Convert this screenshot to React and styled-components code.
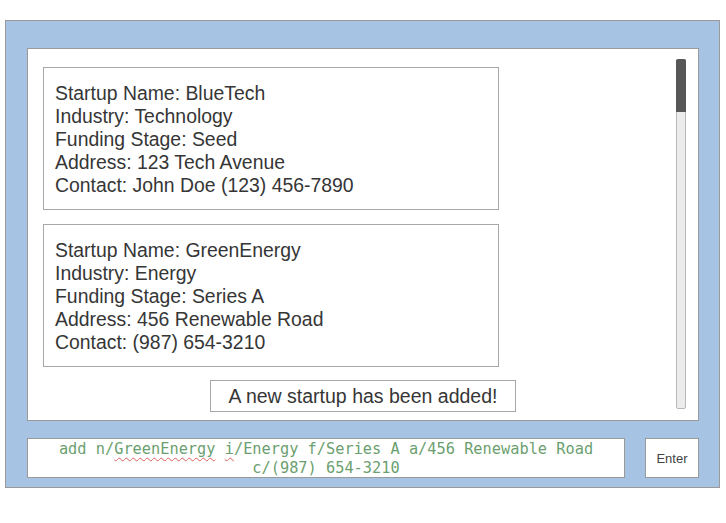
import React from "react";
import styled, { createGlobalStyle } from "styled-components";

const GlobalStyle = createGlobalStyle`
    body {
        margin: 0;
        background: #ffffff;
        font-family: "Liberation Sans", Arial, sans-serif;
    }
`;

const startups = [
    {
        name: "BlueTech",
        industry: "Technology",
        stage: "Seed",
        address: "123 Tech Avenue",
        contact: "John Doe (123) 456-7890",
    },
    {
        name: "GreenEnergy",
        industry: "Energy",
        stage: "Series A",
        address: "456 Renewable Road",
        contact: "(987) 654-3210",
    },
];

const Page = styled.div`
    padding: 20px 6px 0 5px;
    width: 726px;
    box-sizing: border-box;
`;

const Frame = styled.div`
    background: #a6c3e4;
    border: 1px solid #9a9a9a;
    height: 468px;
    box-sizing: border-box;
    padding: 27px 20px 9px 21px;
    display: flex;
    flex-direction: column;
    gap: 17px;
`;

const Panel = styled.div`
    position: relative;
    background: #ffffff;
    border: 1px solid #9a9a9a;
    height: 373px;
    box-sizing: border-box;
    padding: 18px 15px 8px 15px;
    display: flex;
    flex-direction: column;
    gap: 14px;
`;

const Card = styled.div`
    width: 456px;
    height: 143px;
    box-sizing: border-box;
    border: 1.5px solid #a8a8a8;
    padding: 14px 11px 12px;
    color: #363636;
    font-size: 19.4px;
    line-height: 23px;
`;

const Notice = styled.div`
    align-self: center;
    width: 306px;
    height: 32px;
    box-sizing: border-box;
    margin-top: -1px;
    border: 1.5px solid #a8a8a8;
    color: #363636;
    font-size: 19.5px;
    display: flex;
    align-items: center;
    justify-content: center;
`;

const ScrollTrack = styled.div`
    position: absolute;
    top: 10px;
    right: 12px;
    bottom: 11px;
    width: 10px;
    box-sizing: border-box;
    background: #ececec;
    border: 1px solid #b8b8b8;
    border-radius: 2px;
`;

const ScrollThumb = styled.div`
    height: 53px;
    margin: -1px;
    background: #575757;
    border-radius: 2px 2px 0 0;
`;

const CommandRow = styled.div`
    display: flex;
    gap: 20px;
    height: 40px;
`;

const CommandBox = styled.div`
    flex: 1;
    background: #ffffff;
    border: 1px solid #9a9a9a;
    box-sizing: border-box;
    font-family: "DejaVu Sans Mono", monospace;
    font-size: 15.3px;
    line-height: 19px;
    color: #6c9f6f;
    text-align: center;
    padding-top: 1px;
`;

const Misspelt = styled.span`
    text-decoration: underline wavy #e06060;
    text-decoration-thickness: 1px;
    text-underline-offset: 3px;
`;

const EnterButton = styled.div`
    width: 54px;
    background: #ffffff;
    border: 1px solid #9a9a9a;
    box-sizing: border-box;
    color: #444444;
    font-size: 13px;
    display: flex;
    align-items: center;
    justify-content: center;
`;

const StartupCard = ({ startup }) => (
    <Card>
        <div>Startup Name: {startup.name}</div>
        <div>Industry: {startup.industry}</div>
        <div>Funding Stage: {startup.stage}</div>
        <div>Address: {startup.address}</div>
        <div>Contact: {startup.contact}</div>
    </Card>
);

const App = () => {
    return (
        <>
            <GlobalStyle />
            <Page>
                <Frame>
                    <Panel>
                        {startups.map((s) => (
                            <StartupCard key={s.name} startup={s} />
                        ))}
                        <Notice>A new startup has been added!</Notice>
                        <ScrollTrack>
                            <ScrollThumb />
                        </ScrollTrack>
                    </Panel>
                    <CommandRow>
                        <CommandBox>
                            add n/<Misspelt>GreenEnergy</Misspelt> <Misspelt>i</Misspelt>/Energy f/Series A a/456 Renewable Road
                            <br />
                            c/(987) 654-3210
                        </CommandBox>
                        <EnterButton>Enter</EnterButton>
                    </CommandRow>
                </Frame>
            </Page>
        </>
    );
};

export default App;
